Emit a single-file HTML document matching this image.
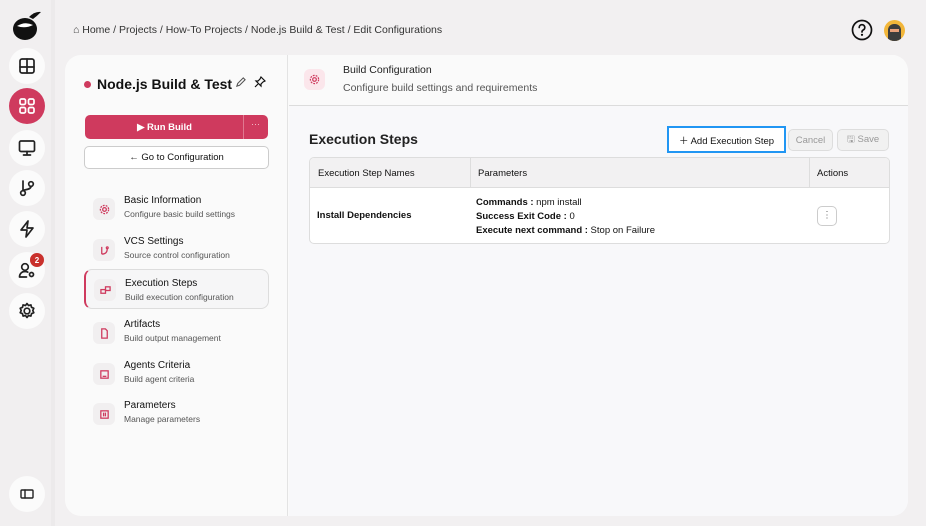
<!DOCTYPE html>
<html><head><meta charset="utf-8"><style>
*{box-sizing:border-box;margin:0;padding:0}
body{width:926px;height:526px;overflow:hidden;background:#f2f0f1;font-family:"Liberation Sans",sans-serif;color:#111;position:relative}
.rail{position:absolute;left:0;top:0;width:51px;height:526px;background:#f1eff0}
.strip{position:absolute;left:51px;top:0;width:4px;height:526px;background:#eceaeb}
.ri{position:absolute;left:9px;width:36px;height:36px;border-radius:50%;background:#fbfbfb;display:flex;align-items:center;justify-content:center}
.ri svg{width:20px;height:20px;fill:none;stroke:#222;stroke-width:1.7;stroke-linecap:round;stroke-linejoin:round}
.bc{position:absolute;left:73px;top:24px;font-size:10.5px;color:#333}
.card{position:absolute;left:65px;top:55px;width:843px;height:461px;background:#fafafa;border-radius:16px;overflow:hidden}
.lp{position:absolute;left:0;top:0;width:223px;height:461px;border-right:1px solid #e3e3e3}
.rp{position:absolute;left:224px;top:0;right:0;bottom:0;background:#f8f8fa}
.hd{height:51px;border-bottom:1px solid #dcdcdc;background:#fafafa;position:relative}
.nav{position:absolute;left:20px;width:183px;height:38px}
.nav .ic{position:absolute;left:8px;top:8px;width:22px;height:22px;border-radius:6px;background:#f1eff0;display:flex;align-items:center;justify-content:center}
.nav .t{position:absolute;left:39px;top:5px;font-size:10px;color:#111}
.nav .s{position:absolute;left:39px;top:19px;font-size:8.5px;color:#555}
.ic svg{width:11px;height:11px;fill:none;stroke:#cf3a5e;stroke-width:1.4}
.btn{position:absolute;height:24px;border-radius:5px;font-size:9.5px;display:flex;align-items:center;justify-content:center}
</style></head><body>
<div class="rail"></div><div class="strip"></div>
<svg style="position:absolute;left:11px;top:8px" width="32" height="34" viewBox="0 0 32 34"><ellipse cx="14" cy="21" rx="12" ry="11" fill="#111"/><path d="M18 9 Q24 3 30 4 Q26 8 22 11Z" fill="#111"/><path d="M6 18 Q14 13 22 17 Q14 21 6 18Z" fill="#fff"/></svg>
<div class="ri" style="top:48px"><svg viewBox="0 0 20 20"><rect x="3" y="3" width="14" height="14" rx="2"/><path d="M3 11h14M10 3v14"/></svg></div>
<div class="ri" style="top:88px;background:#cf3a5e"><svg viewBox="0 0 20 20" style="stroke:#fff"><rect x="3" y="3" width="5.5" height="5.5" rx="1.5"/><rect x="11.5" y="3" width="5.5" height="5.5" rx="1.5"/><rect x="3" y="11.5" width="5.5" height="5.5" rx="1.5"/><rect x="11.5" y="11.5" width="5.5" height="5.5" rx="1.5"/></svg></div>
<div class="ri" style="top:130px"><svg viewBox="0 0 20 20"><rect x="2.5" y="3" width="15" height="10.5" rx="1.5"/><path d="M10 13.5v3.5M6.5 17h7"/></svg></div>
<div class="ri" style="top:170px"><svg viewBox="0 0 20 20"><circle cx="6" cy="15" r="2.3"/><circle cx="14" cy="6" r="2.3"/><path d="M6 3v9.7M14 8.3c0 4-8 3-8 4.5"/></svg></div>
<div class="ri" style="top:211px"><svg viewBox="0 0 20 20"><path d="M11 2 4 11h6l-1 7 7-9h-6z"/></svg></div>
<div class="ri" style="top:252px"><svg viewBox="0 0 20 20"><circle cx="8" cy="7" r="3.3"/><path d="M2.5 17c0-3.5 2.5-5.5 5.5-5.5 1.2 0 2 .2 2.8.6M2.5 17h7"/><circle cx="14.5" cy="14.5" r="2"/></svg></div>
<div style="position:absolute;left:30px;top:253px;width:14px;height:14px;border-radius:50%;background:#c9302c;color:#fff;font-size:8px;font-weight:bold;display:flex;align-items:center;justify-content:center">2</div>
<div class="ri" style="top:293px"><svg viewBox="0 0 20 20"><circle cx="10" cy="10" r="2.8"/><path d="M10 2.5l1.5 2 2.4-.6.6 2.4 2.3 1-1 2.2 1 2.2-2.3 1-.6 2.4-2.4-.6-1.5 2-1.5-2-2.4.6-.6-2.4-2.3-1 1-2.2-1-2.2 2.3-1 .6-2.4 2.4.6z"/></svg></div>
<div class="ri" style="top:476px"><svg viewBox="0 0 20 20" style="stroke-width:1.4"><rect x="4" y="6" width="12" height="8" rx="1"/><path d="M8 6v8"/></svg></div>
<div class="bc">⌂ Home / Projects / How-To Projects / Node.js Build &amp; Test / Edit Configurations</div>
<svg style="position:absolute;left:851px;top:19px" width="22" height="22" viewBox="0 0 22 22"><circle cx="11" cy="11" r="9.5" fill="none" stroke="#111" stroke-width="1.7"/><path d="M8.2 8.5a2.8 2.8 0 1 1 4 2.5c-1 .5-1.2 1-1.2 2" fill="none" stroke="#111" stroke-width="1.7" stroke-linecap="round"/><circle cx="11" cy="15.8" r="1.1"/></svg>
<div style="position:absolute;left:884px;top:20px;width:21px;height:21px;border-radius:50%;background:#f2b63a;overflow:hidden"><div style="position:absolute;left:4px;top:4px;width:13px;height:17px;border-radius:6px 6px 2px 2px;background:#3d3d3d"></div><div style="position:absolute;left:6px;top:9px;width:9px;height:3px;background:#e9a07a"></div></div>
<div class="card">
 <div class="lp">
  <div style="position:absolute;left:19px;top:26px;width:7px;height:7px;border-radius:50%;background:#cf3a5e"></div>
  <div style="position:absolute;left:32px;top:21px;font-size:14px;font-weight:bold">Node.js Build &amp; Test</div>
  <svg style="position:absolute;left:170px;top:22px" width="11" height="11" viewBox="0 0 12 12" fill="none" stroke="#555" stroke-width="1.2"><path d="M2 10l1-3 6-6 2 2-6 6z"/></svg>
  <svg style="position:absolute;left:189px;top:21px" width="12" height="12" viewBox="0 0 12 12" fill="none" stroke="#111" stroke-width="1.2"><path d="M7 1l4 4-2 1-2 2 0 2-5-5 2 0 2-2z M4 8l-3 3"/></svg>
  <div class="btn" style="left:20px;top:60px;width:183px;background:#cf3a5e;color:#fff;font-weight:bold"><span style="margin-right:24px">▶ Run Build</span></div>
  <div style="position:absolute;left:178px;top:60px;width:1px;height:24px;background:#e07890"></div>
  <div style="position:absolute;left:186px;top:64px;color:#f4c6d1;font-size:9px">···</div>
  <div class="btn" style="left:19px;top:91px;width:185px;height:23px;border:1px solid #ccc;background:#fff;color:#111">← Go to Configuration</div>
  <div class="nav" style="top:135px"><div class="ic"><svg viewBox="0 0 12 12"><circle cx="6" cy="6" r="2"/><circle cx="6" cy="6" r="4.5" stroke-dasharray="2 1.2"/></svg></div><div class="t">Basic Information</div><div class="s">Configure basic build settings</div></div>
  <div class="nav" style="top:176px"><div class="ic"><svg viewBox="0 0 12 12"><path d="M3 2v8M3 10c4 0 6-2 6-6"/><circle cx="9" cy="3" r="1"/></svg></div><div class="t">VCS Settings</div><div class="s">Source control configuration</div></div>
  <div class="nav" style="top:214px;left:19px;width:185px;height:40px;border:1px solid #ddd;border-left:2px solid #cf3a5e;border-radius:8px;background:#f6f6f7"><div class="ic" style="top:9px"><svg viewBox="0 0 12 12"><rect x="1" y="5" width="5" height="4"/><rect x="6" y="2" width="5" height="4"/></svg></div><div class="t" style="top:8px">Execution Steps</div><div class="s" style="top:22px">Build execution configuration</div></div>
  <div class="nav" style="top:259px"><div class="ic"><svg viewBox="0 0 12 12"><path d="M3 1h4l2 2v8H3z"/></svg></div><div class="t">Artifacts</div><div class="s">Build output management</div></div>
  <div class="nav" style="top:300px"><div class="ic"><svg viewBox="0 0 12 12"><rect x="2" y="2" width="8" height="8"/><path d="M4 8h4"/></svg></div><div class="t">Agents Criteria</div><div class="s">Build agent criteria</div></div>
  <div class="nav" style="top:340px"><div class="ic"><svg viewBox="0 0 12 12"><rect x="2" y="2" width="8" height="8"/><path d="M5 4v4M7 4v4"/></svg></div><div class="t">Parameters</div><div class="s">Manage parameters</div></div>
 </div>
 <div class="rp">
  <div class="hd">
   <div style="position:absolute;left:15px;top:14px;width:21px;height:21px;border-radius:6px;background:#fbe6eb;display:flex;align-items:center;justify-content:center"><svg width="11" height="11" viewBox="0 0 12 12" fill="none" stroke="#cf3a5e" stroke-width="1.3"><circle cx="6" cy="6" r="2"/><circle cx="6" cy="6" r="4.5" stroke-dasharray="2 1.2"/></svg></div>
   <div style="position:absolute;left:54px;top:9px;font-size:10.5px;color:#222">Build Configuration</div>
   <div style="position:absolute;left:54px;top:27px;font-size:10.5px;color:#555">Configure build settings and requirements</div>
  </div>
  <div style="position:absolute;left:20px;top:76px;font-size:14px;font-weight:bold;color:#222">Execution Steps</div>
  <div class="btn" style="left:378px;top:71px;width:119px;height:27px;border:2px solid #2196f3;border-radius:0;background:#fff;color:#111">＋ Add Execution Step</div>
  <div class="btn" style="left:499px;top:74px;width:45px;height:22px;border:1px solid #ddd;background:#f1f1f1;color:#999">Cancel</div>
  <div class="btn" style="left:548px;top:74px;width:52px;height:22px;border:1px solid #ddd;background:#f1f1f1;color:#999">🖫 Save</div>
  <div style="position:absolute;left:20px;top:102px;width:581px;height:87px;border:1px solid #ddd;border-radius:5px;background:#fff;overflow:hidden;font-size:9.5px">
   <div style="height:30px;background:#f2f1f2;border-bottom:1px solid #ddd;position:relative">
    <span style="position:absolute;left:8px;top:10px">Execution Step Names</span>
    <div style="position:absolute;left:160px;top:0;width:1px;height:30px;background:#ddd"></div>
    <span style="position:absolute;left:168px;top:10px">Parameters</span>
    <div style="position:absolute;left:499px;top:0;width:1px;height:30px;background:#ddd"></div>
    <span style="position:absolute;left:507px;top:10px">Actions</span>
   </div>
   <span style="position:absolute;left:7px;top:52px;font-weight:bold">Install Dependencies</span>
   <div style="position:absolute;left:166px;top:38px;line-height:14px"><b>Commands :</b> npm install<br><b>Success Exit Code :</b> 0<br><b>Execute next command :</b> Stop on Failure</div>
   <div style="position:absolute;left:507px;top:48px;width:20px;height:20px;border:1px solid #ccc;border-radius:5px;text-align:center;line-height:18px;color:#666">⋮</div>
  </div>
 </div>
</div>
</body></html>
